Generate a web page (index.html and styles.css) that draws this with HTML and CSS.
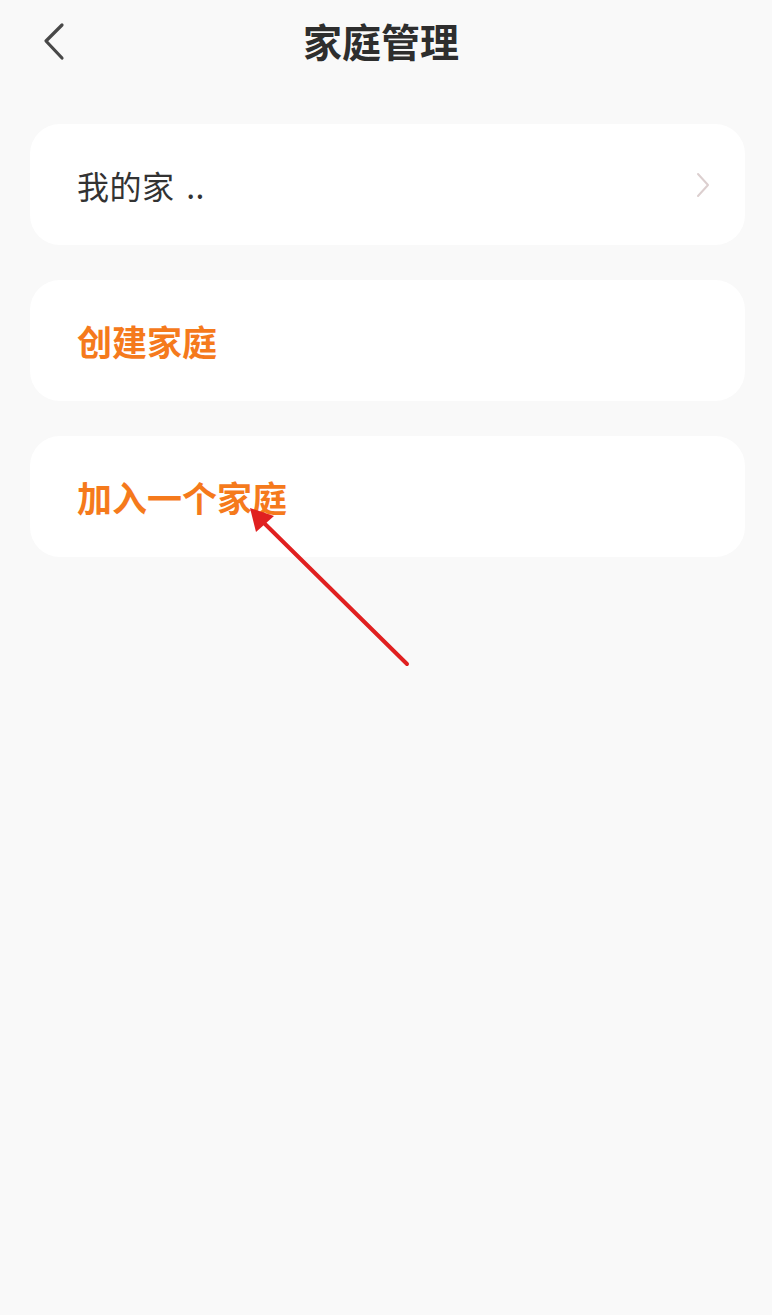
FILE: index.html
```html
<!DOCTYPE html>
<html lang="zh-CN">
<head>
<meta charset="utf-8">
<title>家庭管理</title>
<link rel="stylesheet" href="styles.css">
</head>
<body>
<div class="page">
  <header class="topbar">
    <div class="back">
      <svg width="24" height="40" viewBox="0 0 24 40" aria-hidden="true">
        <polyline points="19,4 3,20 19,37" fill="none" stroke="#484848" stroke-width="3.2" stroke-linecap="round" stroke-linejoin="round"/>
      </svg>
    </div>
    <h1 class="title">家庭管理</h1>
    <div class="spacer"></div>
  </header>
  <main class="list">
    <div class="card">
      <span class="label">我的家 ..</span>
      <svg class="chev" width="16" height="28" viewBox="0 0 16 28" aria-hidden="true">
        <polyline points="3,3 13,14 3,25" fill="none" stroke="#dccfcf" stroke-width="2" stroke-linecap="round" stroke-linejoin="round"/>
      </svg>
    </div>
    <div class="card">
      <span class="action">创建家庭</span>
    </div>
    <div class="card">
      <span class="action">加入一个家庭</span>
    </div>
  </main>
  <svg class="pointer" width="772" height="700" viewBox="0 0 772 700" aria-hidden="true">
    <line x1="407" y1="664" x2="262" y2="521" stroke="#e02020" stroke-width="4" stroke-linecap="round"/>
    <polygon points="250,508 256,532 274,516" fill="#e02020"/>
  </svg>
</div>
</body>
</html>
```
FILE: styles.css
```css
* { box-sizing: border-box; }
html, body {
  margin: 0;
  padding: 0;
  background: #f9f9f9;
}
body {
  font-family: "Noto Sans CJK SC", "Noto Sans", sans-serif;
  color: #333333;
}
.page {
  position: relative;
  width: 772px;
  min-height: 1315px;
}
.topbar {
  height: 82px;
  display: grid;
  grid-template-columns: 1fr auto 1fr;
  align-items: center;
}
.back {
  padding-left: 43px;
  display: flex;
  align-items: center;
  height: 40px;
}
.title {
  margin: 0;
  font-size: 39px;
  font-weight: 700;
  color: #2e2e2e;
  line-height: 1;
  position: relative;
  left: -5px;
  top: -1px;
}
.list {
  padding: 42px 27px 0 30px;
  display: flex;
  flex-direction: column;
  gap: 35px;
}
.card {
  height: 121px;
  background: #ffffff;
  border-radius: 30px;
  display: flex;
  align-items: center;
  justify-content: space-between;
  padding: 0 34px 0 47px;
}
.label {
  font-size: 32px;
  font-weight: 400;
  color: #333333;
  line-height: 1;
  word-spacing: 4px;
  letter-spacing: 0.5px;
}
.action {
  font-size: 35px;
  font-weight: 700;
  color: #f57a1c;
  line-height: 1;
}
.chev { display: block; }
.pointer {
  position: absolute;
  left: 0;
  top: 0;
  pointer-events: none;
}
```
